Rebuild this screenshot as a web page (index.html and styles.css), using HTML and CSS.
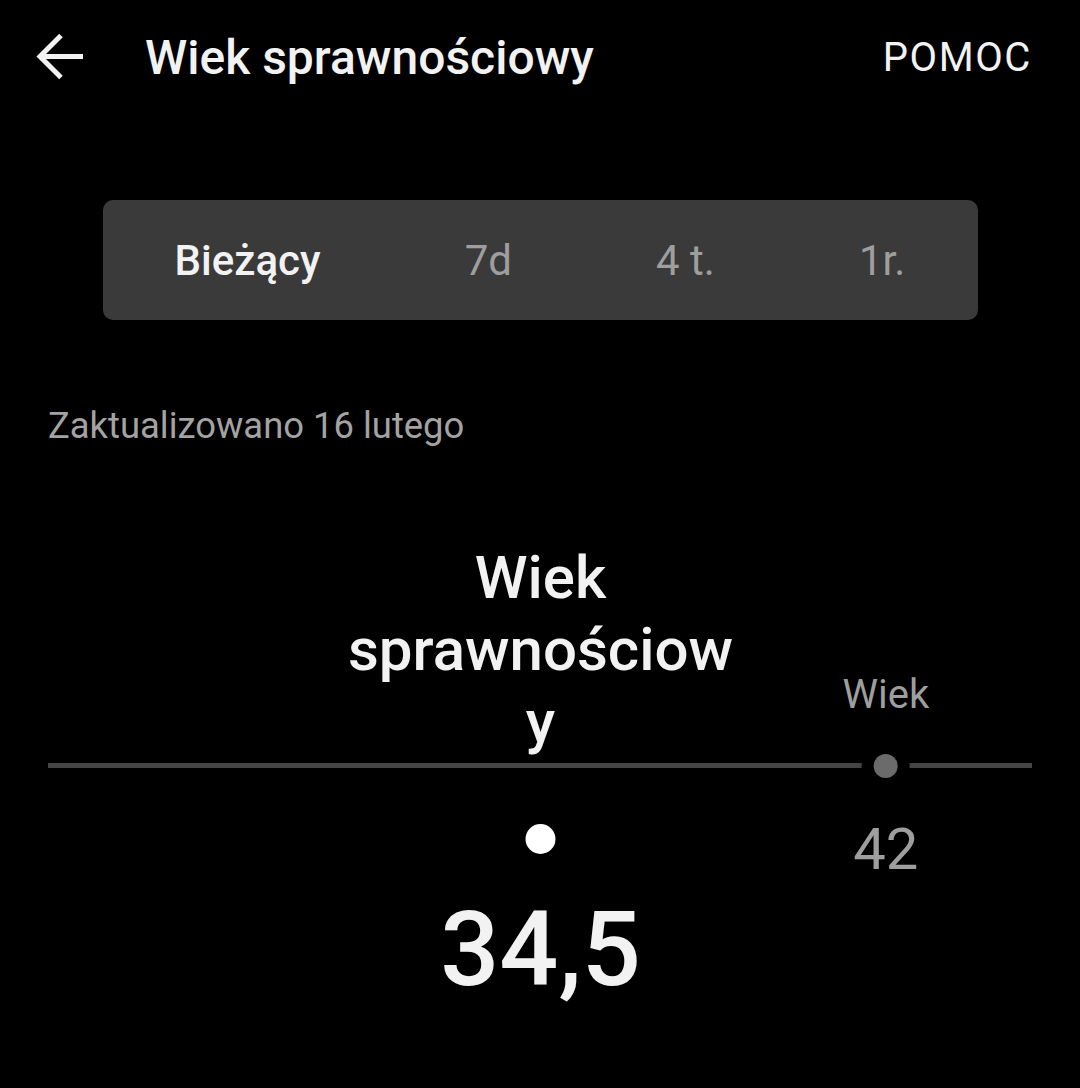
FILE: index.html
```html
<!DOCTYPE html>
<html lang="pl">
<head>
    <meta charset="UTF-8"/>
    <meta name="viewport" content="width=device-width, initial-scale=1.0"/>
    <title>Wiek sprawnościowy</title>
    <link rel="stylesheet" href="styles.css">
</head>
<body>
    <header class="toolbar">
        <button class="back" aria-label="Wstecz">
            <svg width="50" height="50" viewBox="0 0 50 50">
                <path d="M48 24.5 H5 M26 3.5 L5 24.5 L26 45.5" fill="none" stroke="#f2f2f2" stroke-width="5"/>
            </svg>
        </button>
        <h1 class="title">Wiek sprawnościowy</h1>
        <button class="help">POMOC</button>
    </header>

    <div class="tabs">
        <span class="tab active">Bieżący</span>
        <span class="tab">7d</span>
        <span class="tab">4 t.</span>
        <span class="tab">1r.</span>
    </div>

    <p class="updated">Zaktualizowano 16 lutego</p>

    <section class="scale">
        <div class="track"></div>

        <div class="marker user" style="left: 50.05%">
            <div class="marker-label">Wiek sprawnościowy</div>
            <div class="dot"></div>
            <div class="marker-value">34,5</div>
        </div>

        <div class="marker real" style="left: 85.15%">
            <div class="marker-label">Wiek</div>
            <div class="dot"></div>
            <div class="marker-value">42</div>
        </div>
    </section>
</body>
</html>
```

FILE: styles.css
```css
body {
    margin: 0;
    height: 1088px;
    overflow: hidden;
    background-color: #000;
    color: #f2f2f2;
    font-family: Roboto, "Noto Sans", sans-serif;
}
button {
    background: none;
    border: none;
    padding: 0;
    color: inherit;
    font-family: inherit;
    cursor: pointer;
}
.toolbar {
    height: 114px;
    display: flex;
    align-items: center;
    padding: 0 48px 0 35px;
}
.back {
    width: 50px;
    height: 50px;
    display: flex;
}
.title {
    flex: 1;
    margin: 0 0 0 60px;
    font-size: 48px;
    font-weight: 500;
    line-height: normal;
}
.help {
    font-size: 40px;
    font-weight: 400;
    letter-spacing: 1.6px;
}
.tabs {
    margin: 86px auto 0;
    width: 875px;
    height: 120px;
    border-radius: 10px;
    background-color: #3a3a3a;
    display: flex;
    justify-content: space-around;
    align-items: center;
}
.tab {
    font-size: 42px;
    color: #9e9e9e;
}
.tab.active {
    color: #f2f2f2;
    font-weight: 500;
}
.updated {
    margin: 84px 0 0 48px;
    font-size: 36.4px;
    color: #a3a3a3;
}
.scale {
    position: relative;
    margin: 95px 48px 0;
    padding-top: 221px;
    height: 360px;
}
.track {
    height: 5px;
    background-color: #444;
}
.marker {
    position: absolute;
    top: 0;
    transform: translateX(-50%);
    display: flex;
    flex-direction: column;
    align-items: center;
}
.dot {
    border-radius: 50%;
}
.user .marker-label {
    width: 395px;
    text-align: center;
    font-size: 60px;
    font-weight: 500;
    line-height: 72px;
    overflow-wrap: break-word;
}
.user .dot {
    width: 30px;
    height: 30px;
    margin-top: 66px;
    background-color: #fff;
}
.user .marker-value {
    margin-top: 35px;
    font-size: 104px;
    font-weight: 500;
}
.real {
    padding-top: 129px;
    color: #9e9e9e;
}
.real .marker-label {
    font-size: 40px;
}
.real .dot {
    width: 24px;
    height: 24px;
    margin-top: 36px;
    background-color: #6b6b6b;
    box-shadow: 0 0 0 12px #000;
}
.real .marker-value {
    margin-top: 37px;
    font-size: 58px;
}
```
